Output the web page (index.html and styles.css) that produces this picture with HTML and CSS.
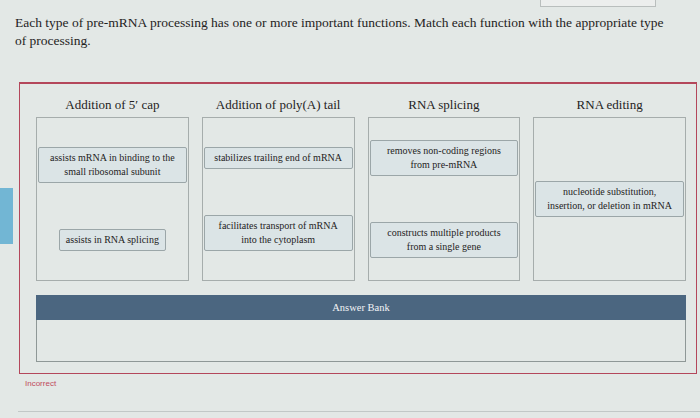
FILE: index.html
```html
<!DOCTYPE html>
<html lang="en">
<head>
    <meta charset="UTF-8">
    <meta name="viewport" content="width=device-width, initial-scale=1.0">
    <title>Pre-mRNA processing</title>
    <link rel="stylesheet" href="styles.css">
</head>
<body>
    <div class="topbar"><div class="tab-box"></div></div>
    <div class="side-tab"></div>

    <p class="question">Each type of pre-mRNA processing has one or more important functions. Match each function with the appropriate type of processing.</p>

    <div class="frame">
        <div class="columns">
            <div class="column">
                <h3>Addition of 5&prime; cap</h3>
                <div class="drop">
                    <div class="card">assists mRNA in binding to the<br>small ribosomal subunit</div>
                    <div class="card card-short">assists in RNA splicing</div>
                </div>
            </div>
            <div class="column">
                <h3>Addition of poly(A) tail</h3>
                <div class="drop">
                    <div class="card">stabilizes trailing end of mRNA</div>
                    <div class="card">facilitates transport of mRNA<br>into the cytoplasm</div>
                </div>
            </div>
            <div class="column">
                <h3>RNA splicing</h3>
                <div class="drop">
                    <div class="card">removes non-coding regions<br>from pre-mRNA</div>
                    <div class="card">constructs multiple products<br>from a single gene</div>
                </div>
            </div>
            <div class="column">
                <h3>RNA editing</h3>
                <div class="drop">
                    <div class="card">nucleotide substitution,<br>insertion, or deletion in mRNA</div>
                </div>
            </div>
        </div>

        <div class="bank">
            <div class="bank-title">Answer Bank</div>
            <div class="bank-body"></div>
        </div>
    </div>

    <div class="status">Incorrect</div>
    <div class="footer-line"></div>
</body>
</html>
```

FILE: styles.css
```css
body { margin: 0; background: #e3e8e6; font-family: "Liberation Serif", "Times New Roman", serif; color: #1f2323; position: relative; height: 418px; overflow: hidden; }
.topbar { height: 7px; display: flex; justify-content: flex-end; padding-right: 44px; }
.tab-box { width: 114px; height: 6px; border: 1px solid #b9bebd; border-top: none; background: #eceeed; }
.side-tab { position: absolute; left: 0; top: 188px; width: 13px; height: 56px; background: #72b6d4; }
.question { margin: 7px 30px 0 15px; font-size: 13.5px; line-height: 18px; }
.frame { margin: 32px 3px 0 19px; border: 1px solid #b4475b; border-top-width: 2px; padding: 12px 10px 11px 16px; }
.columns { display: grid; grid-template-columns: repeat(4, 1fr); gap: 13px; }
.column h3 { margin: 0 0 3px; font-size: 13px; line-height: 18px; font-weight: normal; text-align: center; }
.drop { height: 162px; border: 1px solid #a6adac; display: flex; flex-direction: column; justify-content: center; align-items: stretch; gap: 46px; padding: 0 1px; }
.card { border: 1px solid #9ba6a8; background: #dbe4e6; border-radius: 2px; font-size: 10px; line-height: 14px; text-align: center; padding: 3px 2px; }
.card-short { align-self: center; padding: 3px 6px; }
.bank { margin-top: 14px; }
.bank-title { background: #4b6680; color: #f2f4f6; font-size: 10.5px; text-align: center; height: 25px; line-height: 25px; }
.bank-body { height: 41px; border: 1px solid #8f9897; border-top: none; }
.status { margin: 5px 0 0 25px; font-family: "Liberation Sans", Arial, sans-serif; font-size: 8px; color: #c0485c; }
.footer-line { margin: 23px 0 0 18px; border-top: 1px solid #c2c8c7; }
```
